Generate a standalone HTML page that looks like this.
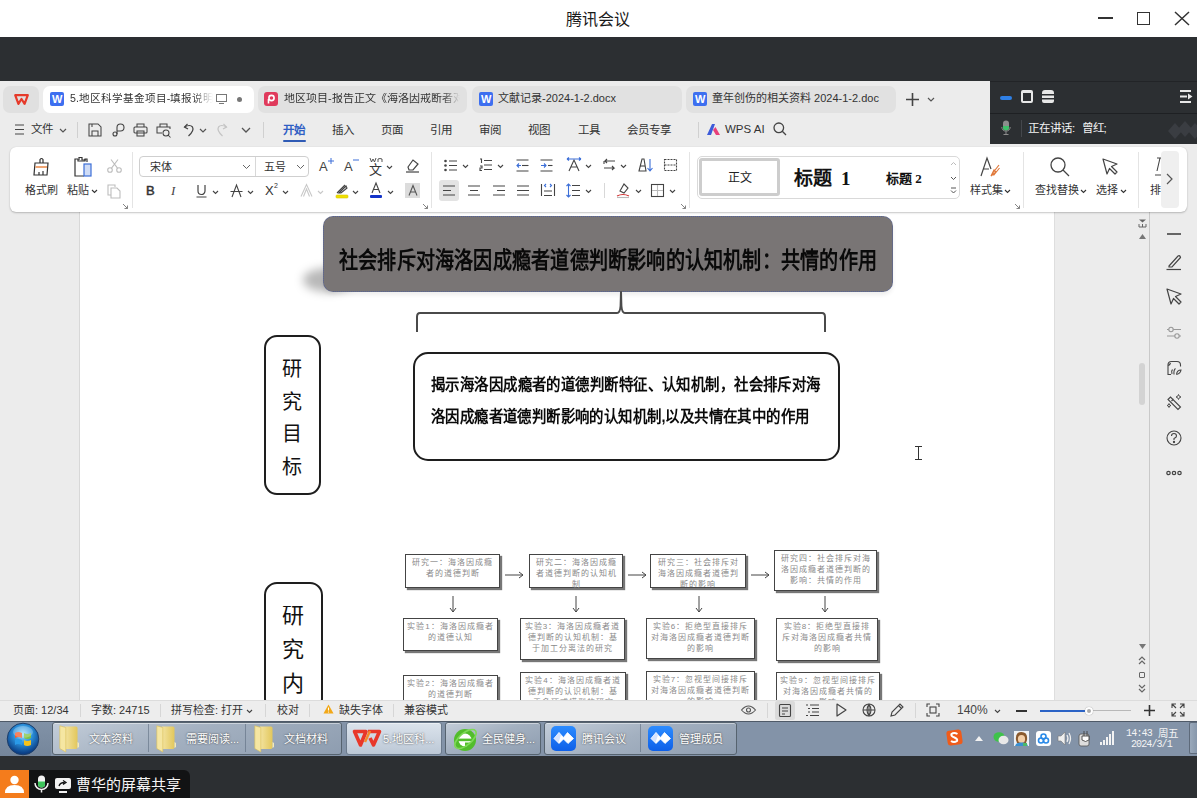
<!DOCTYPE html>
<html lang="zh-CN"><head><meta charset="utf-8">
<style>
*{margin:0;padding:0;box-sizing:border-box}
html,body{width:1197px;height:798px;overflow:hidden;background:#fff;font-family:"Liberation Sans",sans-serif;color:#222}
.a{position:absolute}
.t{position:absolute;white-space:nowrap;line-height:1}
svg{position:absolute;overflow:visible}
.tab{position:absolute;top:86px;height:27px;border-radius:7px;background:#e1e1e1}
.sep{position:absolute;width:1px;background:#d6d6d6}
.serif{font-family:"Liberation Serif",serif}
.fb{position:absolute;background:#fff;border:1px solid #444;box-shadow:2px 2px 1px #777;color:#8a8a8a;font-size:8px;line-height:11px;font-family:"Liberation Sans",sans-serif;text-align:center;padding:2px 3px;letter-spacing:1px}
.tb{position:absolute;top:722px;height:33px;border:1px solid #56636f;border-radius:3px;background:linear-gradient(160deg,#c3cdd9,#a3b0c0 45%,#8e9db0);box-shadow:inset 0 1px 0 rgba(255,255,255,.45)}
.tbt{position:absolute;color:#fff;font-size:11px;white-space:nowrap;text-shadow:0 0 2px #333}
</style></head><body>

<!-- ===== title bar ===== -->
<div class="t" style="left:566px;top:12px;font-size:16px;color:#1a1a1a">腾讯会议</div>
<div class="a" style="left:1098px;top:17px;width:15px;height:2px;background:#333"></div>
<div class="a" style="left:1137px;top:12px;width:13px;height:13px;border:1.6px solid #333"></div>
<svg style="left:1174px;top:11px" width="16" height="15"><path d="M1 1L15 14M15 1L1 14" stroke="#333" stroke-width="1.5"/></svg>

<!-- ===== dark band ===== -->
<div class="a" style="left:0;top:37px;width:1197px;height:44px;background:#2c2f32"></div>

<!-- ===== tab bar + menu ===== -->
<div class="a" style="left:0;top:81px;width:1197px;height:131px;background:#ececec"></div>
<div class="tab" style="left:3px;width:36px;background:#e0e0e0"></div>
<div class="tab" style="left:43px;width:211px;background:#fff"></div>
<div class="tab" style="left:258px;width:209px"></div>
<div class="tab" style="left:472px;width:210px"></div>
<div class="tab" style="left:686px;width:210px"></div>

<!-- tab contents -->
<svg style="left:14px;top:94px" width="15" height="11"><path d="M1.2 1.2H13.8L10.6 9.8L7.5 5L4.4 9.8Z" fill="none" stroke="#e63a2a" stroke-width="2.2" stroke-linejoin="round"/></svg>
<div class="a" style="left:50px;top:92px;width:14px;height:14px;border-radius:2px;background:#3d6ff0"></div>
<div class="t" style="left:52px;top:94px;font-size:11px;font-weight:bold;color:#fff">W</div>
<div class="t" style="left:70px;top:93px;font-size:10.6px;color:#333;width:143px;overflow:hidden;-webkit-mask-image:linear-gradient(90deg,#000 86%,transparent)">5.地区科学基金项目-填报说明书</div>
<svg style="left:216px;top:94px" width="11" height="10"><rect x="0.5" y="0.5" width="10" height="7" fill="none" stroke="#777" stroke-width="1"/><path d="M3 9.5H8" stroke="#777"/></svg>
<div class="a" style="left:237px;top:97px;width:5px;height:5px;border-radius:50%;background:#777"></div>

<div class="a" style="left:264px;top:92px;width:14px;height:14px;border-radius:3px;background:#e03a5c"></div>
<svg style="left:266px;top:94px" width="10" height="10"><circle cx="5.5" cy="4" r="2.6" fill="none" stroke="#fff" stroke-width="1.6"/><path d="M2.5 9.5V5" stroke="#fff" stroke-width="1.6"/></svg>
<div class="t" style="left:284px;top:93px;font-size:11px;color:#333;width:176px;overflow:hidden;-webkit-mask-image:linear-gradient(90deg,#000 90%,transparent)">地区项目-报告正文《海洛因戒断者对社会</div>

<div class="a" style="left:479px;top:92px;width:14px;height:14px;border-radius:2px;background:#3d6ff0"></div>
<div class="t" style="left:481px;top:94px;font-size:11px;font-weight:bold;color:#fff">W</div>
<div class="t" style="left:498px;top:93px;font-size:11px;color:#333">文献记录-2024-1-2.docx</div>

<div class="a" style="left:693px;top:92px;width:14px;height:14px;border-radius:2px;background:#3d6ff0"></div>
<div class="t" style="left:695px;top:94px;font-size:11px;font-weight:bold;color:#fff">W</div>
<div class="t" style="left:712px;top:93px;font-size:11px;color:#333">童年创伤的相关资料 2024-1-2.doc</div>

<svg style="left:905px;top:92px" width="15" height="15"><path d="M7.5 1V14M1 7.5H14" stroke="#444" stroke-width="1.6"/></svg>
<svg style="left:927px;top:97px" width="8" height="5"><path d="M1 1L4 4L7 1" fill="none" stroke="#555" stroke-width="1.2"/></svg>

<!-- menu row -->
<svg style="left:15px;top:124px" width="9" height="11"><path d="M0 1H9M0 5.5H9M0 10H9" stroke="#444" stroke-width="1.2"/></svg>
<div class="t" style="left:31px;top:124px;font-size:11.5px;color:#333">文件</div>
<svg style="left:59px;top:128px" width="8" height="5"><path d="M1 1L4 4L7 1" fill="none" stroke="#555" stroke-width="1.2"/></svg>
<div class="sep" style="left:77px;top:122px;height:16px;background:#d0d0d0"></div>
<svg style="left:88px;top:123px" width="14" height="14" fill="none" stroke="#444" stroke-width="1.05"><path d="M1 1H10L13 4V13H1Z"/><path d="M4 13V8H10V13"/><path d="M4 1V4"/></svg>
<svg style="left:111px;top:123px" width="14" height="14" fill="none" stroke="#444" stroke-width="1.1"><path d="M6 11V4.5A3.5 3.5 0 1 1 9.5 8H6"/><circle cx="4" cy="11" r="2"/></svg>
<svg style="left:133px;top:123px" width="15" height="14" fill="none" stroke="#444" stroke-width="1.05"><path d="M4 4V1H11V4"/><rect x="1" y="4" width="13" height="6" rx="1"/><rect x="4" y="8" width="7" height="5"/></svg>
<svg style="left:156px;top:123px" width="15" height="15" fill="none" stroke="#444" stroke-width="1.05"><path d="M4 4V1H11V4"/><path d="M6 10H1V4H14V6"/><circle cx="10" cy="10" r="3"/><path d="M12 12L14.5 14.5"/></svg>
<svg style="left:183px;top:123px" width="12" height="14" fill="none" stroke="#444" stroke-width="1.2"><path d="M4.5 1L1.5 4L5 6"/><path d="M1.5 4Q7 1 9.5 4Q11.5 7.5 5.5 13"/></svg>
<svg style="left:199px;top:128px" width="8" height="5"><path d="M1 1L4 4L7 1" fill="none" stroke="#555" stroke-width="1.2"/></svg>
<svg style="left:216px;top:123px" width="12" height="14" fill="none" stroke="#c4c4c4" stroke-width="1.2"><path d="M7.5 1L10.5 4L7 6"/><path d="M10.5 4Q5 1 2.5 4Q0.5 7.5 6.5 13"/></svg>
<svg style="left:241px;top:127px" width="10" height="6"><path d="M1 1L5 5L9 1" fill="none" stroke="#555" stroke-width="1.3"/></svg>
<div class="sep" style="left:263px;top:122px;height:16px;background:#d0d0d0"></div>
<div class="t" style="left:283px;top:124.5px;font-size:11.5px;color:#2f5ec4;font-weight:bold">开始</div>
<div class="a" style="left:283px;top:140px;width:23px;height:2px;border-radius:1px;background:#2f5bb5"></div>
<div class="t" style="left:332px;top:124.5px;font-size:11.5px;color:#333">插入</div>
<div class="t" style="left:381px;top:124.5px;font-size:11.5px;color:#333">页面</div>
<div class="t" style="left:430px;top:124.5px;font-size:11.5px;color:#333">引用</div>
<div class="t" style="left:479px;top:124.5px;font-size:11.5px;color:#333">审阅</div>
<div class="t" style="left:528px;top:124.5px;font-size:11.5px;color:#333">视图</div>
<div class="t" style="left:578px;top:124.5px;font-size:11.5px;color:#333">工具</div>
<div class="t" style="left:627px;top:124.5px;font-size:11.5px;color:#333">会员专享</div>
<div class="sep" style="left:698px;top:122px;height:16px;background:#d0d0d0"></div>
<svg style="left:706px;top:123px" width="15" height="13"><path d="M1 12L6 1H9L5 12Z" fill="#3d5bd9"/><path d="M7 7L10 12H14L9.5 4Z" fill="#e8407a"/></svg>
<div class="t" style="left:725px;top:124px;font-size:11.5px;color:#333">WPS AI</div>
<svg style="left:773px;top:122px" width="14" height="14" fill="none" stroke="#444" stroke-width="1.3"><circle cx="5.8" cy="5.8" r="4.8"/><path d="M9.3 9.3L13 13"/></svg>

<!-- dark meeting panel -->
<div class="a" style="left:990px;top:81px;width:207px;height:63px;background:#2c2f32;border-top:1px solid #222427"></div>
<div class="a" style="left:990px;top:113px;width:207px;height:1px;background:#1e2023"></div>
<div class="a" style="left:1000px;top:96px;width:12px;height:4px;border-radius:2px;background:#2f80e6"></div>
<div class="a" style="left:1021px;top:90px;width:12px;height:13px;border:2px solid #e8e8e8;border-top-width:3px;border-radius:2px"></div>
<svg style="left:1042px;top:90px" width="12" height="13"><path d="M0 3Q0 0 3 0H9Q12 0 12 3V4H0Z M0 5.5H12V8H0Z M0 9.5H12V11Q12 13 10 13H2Q0 13 0 11Z" fill="#e8e8e8"/></svg>
<svg style="left:1180px;top:90px" width="13" height="13"><path d="M0 1H11M0 6.5H7M0 12H11" stroke="#e8e8e8" stroke-width="2"/><path d="M8 3.5L12.5 6.5L8 9.5Z" fill="#e8e8e8"/></svg>
<svg style="left:1001px;top:120px" width="10" height="16"><rect x="2" y="0.5" width="6" height="10" rx="3" fill="#8c8c8c"/><path d="M2 6H8V7.5A3 3 0 0 1 2 7.5Z" fill="#3fbf6a"/><path d="M0.8 7A4.2 4.2 0 0 0 9.2 7M5 11.5V14M2.5 14.5H7.5" fill="none" stroke="#8c8c8c" stroke-width="1"/></svg>
<div class="a" style="left:1021px;top:120px;width:1px;height:17px;background:#44474c"></div>
<div class="t" style="left:1028px;top:123px;font-size:11.5px;color:#f2f2f2">正在讲话:&nbsp; 曾红;</div>
<svg style="left:1168px;top:119px" width="30" height="20"><path d="M0 12L7 4L14 12L7 20Z M10 10L17 2L24 10L17 18Z M20 12L27 4L34 12L27 20Z" fill="#3a3d42"/></svg>

<!-- doc bg -->
<div class="a" style="left:0;top:212px;width:1197px;height:488px;background:#ececec"></div>
<div class="a" style="left:79px;top:212px;width:976px;height:488px;background:#fff;border-left:1px solid #d8d8d8;border-right:1px solid #dedede"></div>
<div class="a" style="left:1149px;top:212px;width:1px;height:488px;background:#c9c9c9"></div>
<!-- ribbon panel -->
<div class="a" style="left:10px;top:147px;width:1177px;height:65px;background:#fff;border-radius:6px;box-shadow:0 1px 2px rgba(0,0,0,.22),0 0 1px rgba(0,0,0,.15)"></div>


<!-- ribbon contents -->
<svg style="left:32px;top:157px" width="19" height="20" fill="none" stroke="#333" stroke-width="1.2"><path d="M8 6V2.5Q9.5 0.5 11 2.5V6"/><path d="M3 6H16L15 18H2Z"/><path d="M3.5 10H15" stroke="#e8803a" stroke-width="1.4"/><path d="M11 14V18M7 15V18"/></svg>
<div class="t" style="left:25px;top:185px;font-size:11px;color:#333">格式刷</div>
<svg style="left:72px;top:156px" width="21" height="21" fill="none" stroke="#333" stroke-width="1.2"><path d="M6 3H3V20H12"/><path d="M7 4V1.5H10V4H13V3H15V6"/><path d="M6 3V5H13V3"/><rect x="12" y="8" width="7" height="12" stroke="#3c6fd8" fill="#cfdcf6"/></svg>
<div class="t" style="left:67px;top:185px;font-size:11px;color:#333">粘贴</div>
<svg style="left:91px;top:189px" width="7" height="5"><path d="M1 1L3.5 3.5L6 1" fill="none" stroke="#333" stroke-width="1.1"/></svg>
<svg style="left:107px;top:159px" width="15" height="14" fill="none" stroke="#bdbdbd" stroke-width="1.1"><circle cx="3" cy="11" r="2.3"/><circle cx="12" cy="11" r="2.3"/><path d="M4.5 9.2L11 0.5M10.5 9.2L4 0.5"/></svg>
<svg style="left:107px;top:184px" width="15" height="15" fill="none" stroke="#bdbdbd" stroke-width="1.1"><path d="M4 11H1V1H8V3"/><path d="M4 4H10L13 7V14H4Z"/></svg>
<svg style="left:123px;top:204px" width="5" height="5"><path d="M0 0L4.5 4.5M1.5 4.5H4.5V1.5" fill="none" stroke="#777" stroke-width="0.9"/></svg>
<div class="sep" style="left:132px;top:152px;height:56px;background:#e4e4e4"></div>

<div class="a" style="left:139px;top:156px;width:170px;height:21px;border:1px solid #cfcfcf;border-radius:4px"></div>
<div class="a" style="left:255px;top:157px;width:1px;height:19px;background:#d8d8d8"></div>
<div class="t" style="left:150px;top:162px;font-size:11px;color:#333">宋体</div>
<svg style="left:242px;top:164px" width="9" height="6"><path d="M1 1L4.5 4.5L8 1" fill="none" stroke="#666" stroke-width="1"/></svg>
<div class="t" style="left:264px;top:162px;font-size:11px;color:#333">五号</div>
<svg style="left:296px;top:164px" width="9" height="6"><path d="M1 1L4.5 4.5L8 1" fill="none" stroke="#666" stroke-width="1"/></svg>
<div class="t" style="left:319px;top:160px;font-size:13px;color:#444">A</div>
<svg style="left:328px;top:158px" width="6" height="6"><path d="M3 0V6M0 3H6" stroke="#3c6fd8" stroke-width="1"/></svg>
<div class="t" style="left:344px;top:160px;font-size:13px;color:#444">A</div>
<svg style="left:353px;top:159px" width="6" height="2"><path d="M0 1H6" stroke="#3c6fd8" stroke-width="1"/></svg>
<div class="t" style="left:369px;top:163px;font-size:13px;color:#333">文</div><svg style="left:369px;top:157px" width="15" height="6" fill="none" stroke="#444" stroke-width="0.9"><path d="M1 1L2.5 5L4 2L5.5 5L7 1M9 5V2Q11 1 13 2V5"/></svg>
<svg style="left:386px;top:165px" width="7" height="5"><path d="M1 1L3.5 3.5L6 1" fill="none" stroke="#444" stroke-width="1.1"/></svg>
<svg style="left:405px;top:158px" width="15" height="15" fill="none" stroke="#444" stroke-width="1.2"><path d="M3 9L8 2L13 6L8 12H4Z"/><path d="M1 14H14"/></svg>

<div class="t" style="left:146px;top:184px;font-size:13px;color:#333;-webkit-text-stroke:0.5px #333">B</div>
<div class="t" style="left:171px;top:184px;font-size:13px;color:#444;font-style:italic;font-family:'Liberation Serif',serif">I</div>
<svg style="left:196px;top:184px" width="11" height="14" fill="none" stroke="#444" stroke-width="1.2"><path d="M2 1V7A3.5 3.5 0 0 0 9 7V1M0.5 13H10.5"/></svg>
<svg style="left:212px;top:190px" width="7" height="5"><path d="M1 1L3.5 3.5L6 1" fill="none" stroke="#444" stroke-width="1.1"/></svg>
<svg style="left:230px;top:184px" width="13" height="14" fill="none" stroke="#444" stroke-width="1.1"><path d="M2 13L6.5 1L11 13M0.5 7.5H12.5"/></svg>
<svg style="left:247px;top:190px" width="7" height="5"><path d="M1 1L3.5 3.5L6 1" fill="none" stroke="#444" stroke-width="1.1"/></svg>
<div class="t" style="left:265px;top:184px;font-size:13px;color:#333">X</div>
<div class="t" style="left:274px;top:182px;font-size:7px;color:#333">2</div>
<svg style="left:282px;top:190px" width="7" height="5"><path d="M1 1L3.5 3.5L6 1" fill="none" stroke="#444" stroke-width="1.1"/></svg>
<svg style="left:300px;top:184px" width="13" height="13" fill="none" stroke="#c8c8c8" stroke-width="1.1"><path d="M1 12.5L6.5 0.5L12 12.5M3.5 12.5L6.5 5L9.5 12.5"/></svg>
<svg style="left:317px;top:190px" width="7" height="5"><path d="M1 1L3.5 3.5L6 1" fill="none" stroke="#c8c8c8" stroke-width="1.1"/></svg>
<svg style="left:335px;top:182px" width="14" height="17"><path d="M2 11L10 3M4 11L11 4L12 6L6 11Z" fill="none" stroke="#444" stroke-width="1.1"/><rect x="1" y="13" width="12" height="3" rx="1" fill="#f0e000" stroke="#d9c800" stroke-width="0.6"/></svg>
<svg style="left:352px;top:190px" width="7" height="5"><path d="M1 1L3.5 3.5L6 1" fill="none" stroke="#444" stroke-width="1.1"/></svg>
<svg style="left:369px;top:182px" width="14" height="17"><path d="M3 11L7 1L11 11M4.5 7.5H9.5" fill="none" stroke="#444" stroke-width="1.1"/><rect x="1" y="13" width="12" height="3" rx="1" fill="#1233c8"/></svg>
<svg style="left:387px;top:190px" width="7" height="5"><path d="M1 1L3.5 3.5L6 1" fill="none" stroke="#444" stroke-width="1.1"/></svg>
<div class="a" style="left:405px;top:183px;width:15px;height:15px;background:#dcdcdc"></div>
<svg style="left:408px;top:185px" width="10" height="11"><path d="M1 10.5L5 0.5L9 10.5M2.5 7H7.5" fill="none" stroke="#555" stroke-width="1.1"/></svg>
<svg style="left:423px;top:204px" width="5" height="5"><path d="M0 0L4.5 4.5M1.5 4.5H4.5V1.5" fill="none" stroke="#777" stroke-width="0.9"/></svg>
<div class="sep" style="left:431px;top:152px;height:56px;background:#e4e4e4"></div>

<svg style="left:444px;top:159px" width="14" height="13" fill="#444"><circle cx="1.5" cy="2" r="1.3"/><circle cx="1.5" cy="6.5" r="1.3"/><circle cx="1.5" cy="11" r="1.3"/><path d="M5 2H13M5 6.5H13M5 11H13" stroke="#444" stroke-width="1.1"/></svg>
<svg style="left:462px;top:164px" width="7" height="5"><path d="M1 1L3.5 3.5L6 1" fill="none" stroke="#444" stroke-width="1.1"/></svg>
<svg style="left:479px;top:158px" width="14" height="14" fill="none" stroke="#444" stroke-width="1.1"><path d="M1 1H2.5V5M1 8H3V10H1V12.5H3M5 2.5H13M5 7H13M5 11.5H13"/></svg>
<svg style="left:497px;top:164px" width="7" height="5"><path d="M1 1L3.5 3.5L6 1" fill="none" stroke="#444" stroke-width="1.1"/></svg>
<svg style="left:516px;top:159px" width="13" height="13" fill="none" stroke-width="1.1"><path d="M0.5 1H12.5M0.5 12H12.5" stroke="#444"/><path d="M6 6.5H12.5" stroke="#444"/><path d="M1 6.5H5M3 4.5L1 6.5L3 8.5" stroke="#3c6fd8"/></svg>
<svg style="left:540px;top:159px" width="13" height="13" fill="none" stroke-width="1.1"><path d="M0.5 1H12.5M0.5 12H12.5" stroke="#444"/><path d="M8 6.5H12.5" stroke="#444"/><path d="M1 6.5H6M4 4.5L6 6.5L4 8.5" stroke="#3c6fd8"/></svg>
<svg style="left:566px;top:157px" width="16" height="15" fill="none" stroke-width="1.1"><path d="M3 14L8 3L13 14M5 10H11" stroke="#444"/><path d="M1 2H15M1 2L3 0.5M1 2L3 3.5M15 2L13 0.5M15 2L13 3.5" stroke="#3c6fd8"/></svg>
<svg style="left:585px;top:164px" width="7" height="5"><path d="M1 1L3.5 3.5L6 1" fill="none" stroke="#444" stroke-width="1.1"/></svg>
<svg style="left:603px;top:158px" width="13" height="14" fill="none" stroke="#444" stroke-width="1.1"><path d="M12 3H2L4 1M2 3L4 5M1 10H11L9 8M11 10L9 12M1 3V6"/></svg>
<svg style="left:620px;top:164px" width="7" height="5"><path d="M1 1L3.5 3.5L6 1" fill="none" stroke="#444" stroke-width="1.1"/></svg>
<svg style="left:638px;top:158px" width="15" height="14" fill="none" stroke-width="1.1"><path d="M1 13L4 1H6L8 13Z" stroke="#444"/><path d="M2 8H7" stroke="#444"/><path d="M12 1V12.5M9.5 10L12 12.8L14.5 10" stroke="#3c6fd8"/></svg>
<svg style="left:664px;top:159px" width="13" height="12" fill="none" stroke="#444" stroke-width="1.1" stroke-dasharray="2 1"><rect x="0.5" y="0.5" width="12" height="11"/><path d="M0.5 6H12.5"/></svg>

<div class="a" style="left:439px;top:180px;width:20px;height:21px;border-radius:3px;background:#e3e3e3"></div>
<svg style="left:443px;top:185px" width="12" height="11" fill="none" stroke="#444" stroke-width="1.1"><path d="M0 1H12M0 5.5H8M0 10H12"/></svg>
<svg style="left:468px;top:185px" width="12" height="11" fill="none" stroke="#444" stroke-width="1.1"><path d="M0 1H12M2 5.5H10M0 10H12"/></svg>
<svg style="left:493px;top:185px" width="12" height="11" fill="none" stroke="#444" stroke-width="1.1"><path d="M0 1H12M4 5.5H12M0 10H12"/></svg>
<svg style="left:517px;top:185px" width="12" height="11" fill="none" stroke="#444" stroke-width="1.1"><path d="M0 1H12M0 5.5H12M0 10H12"/></svg>
<svg style="left:541px;top:183px" width="14" height="14" fill="none" stroke-width="1.1"><path d="M0.5 1V13M13.5 1V13M3 8H11M3 12.5H11" stroke="#444"/><path d="M5 1L3.5 2.5L5 4M9 1L10.5 2.5L9 4" stroke="#3c6fd8"/></svg>
<svg style="left:566px;top:183px" width="14" height="15" fill="none" stroke-width="1.1"><path d="M6 2.5H14M6 7.5H14M6 12.5H14" stroke="#444"/><path d="M2.5 1V14M0.5 3L2.5 1L4.5 3M0.5 12L2.5 14L4.5 12" stroke="#3c6fd8"/></svg>
<svg style="left:585px;top:189px" width="7" height="5"><path d="M1 1L3.5 3.5L6 1" fill="none" stroke="#444" stroke-width="1.1"/></svg>
<div class="sep" style="left:604px;top:183px;height:15px;background:#d8d8d8"></div>
<svg style="left:616px;top:182px" width="15" height="17" fill="none" stroke-width="1.1"><path d="M4 9L8 2L12 6L8 11Z" stroke="#444"/><path d="M1 14Q7 11 13 14" stroke="#d03030"/><path d="M1 15.5H13" stroke="#bbb"/></svg>
<svg style="left:635px;top:189px" width="7" height="5"><path d="M1 1L3.5 3.5L6 1" fill="none" stroke="#444" stroke-width="1.1"/></svg>
<svg style="left:651px;top:184px" width="13" height="13" fill="none" stroke-width="1.1"><rect x="0.5" y="0.5" width="12" height="12" stroke="#444"/><path d="M6.5 1V12M1 6.5H12" stroke="#bbb"/></svg>
<svg style="left:669px;top:189px" width="7" height="5"><path d="M1 1L3.5 3.5L6 1" fill="none" stroke="#444" stroke-width="1.1"/></svg>
<svg style="left:681px;top:204px" width="5" height="5"><path d="M0 0L4.5 4.5M1.5 4.5H4.5V1.5" fill="none" stroke="#777" stroke-width="0.9"/></svg>
<div class="sep" style="left:689px;top:152px;height:56px;background:#e4e4e4"></div>

<div class="a" style="left:697px;top:156px;width:263px;height:43px;border:1px solid #d9d9d9;border-radius:5px"></div>
<div class="a" style="left:699px;top:158px;width:81px;height:38px;border:3px solid #cdcdcd;border-radius:3px"></div>
<div class="t" style="left:728px;top:172px;font-size:12px;color:#222">正文</div>
<div class="t" style="left:794px;top:169px;font-size:19px;color:#111;font-weight:bold">标题<span class="serif" style="margin-left:9px">1</span></div>
<div class="t" style="left:886px;top:172px;font-size:13px;color:#111;font-weight:bold">标题<span class="serif"> 2</span></div>
<svg style="left:950px;top:160px" width="7" height="36" fill="none" stroke-width="1"><path d="M1 5L3.5 2.5L6 5" stroke="#bbb"/><path d="M1 17L3.5 19.5L6 17" stroke="#555"/><path d="M1 28H6M1 30.5L3.5 33L6 30.5" stroke="#555"/></svg>

<svg style="left:980px;top:157px" width="22" height="20" fill="none" stroke-width="1.2"><path d="M1 19L7 1L11 12M3.5 12H9" stroke="#444"/><path d="M12 17L19 8M13.5 18.5L19.5 11M11 19L14 13L16 15Z" stroke="#e0783a"/></svg>
<div class="t" style="left:970px;top:185px;font-size:11px;color:#333">样式集</div>
<svg style="left:1004px;top:189px" width="7" height="5"><path d="M1 1L3.5 3.5L6 1" fill="none" stroke="#333" stroke-width="1.1"/></svg>
<svg style="left:1015px;top:204px" width="5" height="5"><path d="M0 0L4.5 4.5M1.5 4.5H4.5V1.5" fill="none" stroke="#777" stroke-width="0.9"/></svg>
<div class="sep" style="left:1023px;top:152px;height:56px;background:#e4e4e4"></div>
<svg style="left:1050px;top:157px" width="20" height="20" fill="none" stroke="#444" stroke-width="1.3"><circle cx="8" cy="8" r="7"/><path d="M13 13L19 19"/></svg>
<div class="t" style="left:1035px;top:185px;font-size:11px;color:#333">查找替换</div>
<svg style="left:1080px;top:189px" width="7" height="5"><path d="M1 1L3.5 3.5L6 1" fill="none" stroke="#333" stroke-width="1.1"/></svg>
<svg style="left:1102px;top:158px" width="17" height="17" fill="none" stroke="#444" stroke-width="1.2" stroke-linejoin="round"><path d="M1 1L15 6L9.5 8.5L15 14L13 16L7.5 10.5L5 16Z"/></svg>
<div class="t" style="left:1096px;top:185px;font-size:11px;color:#333">选择</div>
<svg style="left:1120px;top:189px" width="7" height="5"><path d="M1 1L3.5 3.5L6 1" fill="none" stroke="#333" stroke-width="1.1"/></svg>
<div class="sep" style="left:1138px;top:152px;height:56px;background:#e4e4e4"></div>
<svg style="left:1155px;top:157px" width="8" height="20" fill="none" stroke="#444" stroke-width="1.1"><path d="M2 1H8M5 1L2 14M0 18H8"/></svg>
<div class="t" style="left:1150px;top:185px;font-size:11px;color:#333">排</div>
<div class="a" style="left:1161px;top:151px;width:18px;height:57px;border-radius:4px;background:#efefef"></div>
<svg style="left:1166px;top:173px" width="7" height="12"><path d="M1 1L6 6L1 11" fill="none" stroke="#555" stroke-width="1.2"/></svg>

<!-- ===== document area ===== -->


<!-- doc content -->
<div class="a" style="left:303px;top:268px;width:50px;height:24px;border-radius:50%;background:rgba(0,0,0,.28);filter:blur(5px)"></div>
<div class="a" style="left:323px;top:216px;width:570px;height:76px;border-radius:10px;background:#797575;border:1.5px dotted #52619a;box-shadow:0 3px 4px rgba(0,0,0,.07)"></div>
<div class="t" style="left:339px;top:249px;width:648px;font-size:23px;color:#0a0a0a;font-weight:bold;font-family:'Liberation Sans',sans-serif;transform:scaleX(0.83);transform-origin:0 0;text-align:justify;text-align-last:justify">社会排斥对海洛因成瘾者道德判断影响的认知机制：共情的作用</div>
<svg style="left:0;top:0" width="1197" height="798"><path d="M417 332V317Q417 313 420 313H617Q620 313 620.6 306L621 292L621.4 306Q622 313 625 313H822Q825 313 825 317V332" fill="none" stroke="#4a4a4a" stroke-width="2" stroke-linejoin="round"/></svg>
<div class="a" style="left:264px;top:335px;width:57px;height:160px;border:2px solid #1e1e1e;border-radius:13px"></div>
<div class="t" style="left:276px;top:353px;font-size:20px;line-height:32.5px;color:#111;width:32px;white-space:normal;text-align:center;word-break:break-all">研<br>究<br>目<br>标</div>
<div class="a" style="left:413px;top:352px;width:427px;height:109px;border:2px solid #1e1e1e;border-radius:15px"></div>
<div class="t" style="left:431px;top:369px;width:433px;font-size:16px;line-height:32px;color:#0a0a0a;font-weight:bold;font-family:'Liberation Sans',sans-serif;transform:scaleX(0.9);transform-origin:0 0;text-align:justify;text-align-last:justify">揭示海洛因成瘾者的道德判断特征、认知机制，社会排斥对海</div>
<div class="t" style="left:431px;top:401px;width:420px;font-size:16px;line-height:32px;color:#0a0a0a;font-weight:bold;font-family:'Liberation Sans',sans-serif;transform:scaleX(0.9);transform-origin:0 0;text-align:justify;text-align-last:justify">洛因成瘾者道德判断影响的认知机制,以及共情在其中的作用</div>
<div class="a" style="left:264px;top:582px;width:59px;height:130px;border:2px solid #1e1e1e;border-radius:13px"></div>
<div class="t" style="left:276px;top:599px;font-size:22px;line-height:34px;color:#111;width:34px;white-space:normal;text-align:center">研<br>究<br>内<br>容</div>
<div class="a" style="left:918px;top:446px;width:1px;height:14px;background:#333"></div>
<div class="a" style="left:915px;top:446px;width:7px;height:1px;background:#333"></div>
<div class="a" style="left:915px;top:459px;width:7px;height:1px;background:#333"></div>

<div class="fb" style="left:405px;top:554px;width:95px;height:34px">研究一：海洛因成瘾者的道德判断</div>
<div class="fb" style="left:529px;top:554px;width:94px;height:34px">研究二：海洛因成瘾者道德判断的认知机制</div>
<div class="fb" style="left:650px;top:554px;width:96px;height:34px;overflow:hidden">研究三：社会排斥对海洛因成瘾者道德判断的影响</div>
<div class="fb" style="left:774px;top:550px;width:103px;height:41px">研究四：社会排斥对海洛因成瘾者道德判断的影响：共情的作用</div>
<div class="fb" style="left:403px;top:618px;width:95px;height:33px">实验1：海洛因成瘾者的道德认知</div>
<div class="fb" style="left:520px;top:618px;width:105px;height:42px">实验3：海洛因成瘾者道德判断的认知机制：基于加工分离法的研究</div>
<div class="fb" style="left:646px;top:618px;width:109px;height:41px">实验6：拒绝型直接排斥对海洛因成瘾者道德判断的影响</div>
<div class="fb" style="left:776px;top:618px;width:102px;height:43px">实验8：拒绝型直接排斥对海洛因成瘾者共情的影响</div>
<div class="fb" style="left:403px;top:675px;width:95px;height:40px">实验2：海洛因成瘾者的道德判断</div>
<div class="fb" style="left:520px;top:672px;width:106px;height:42px">实验4：海洛因成瘾者道德判断的认识机制：基于多项式模型的研究</div>
<div class="fb" style="left:646px;top:671px;width:109px;height:42px">实验7：忽视型间接排斥对海洛因成瘾者道德判断的影响</div>
<div class="fb" style="left:776px;top:672px;width:104px;height:42px">实验9：忽视型间接排斥对海洛因成瘾者共情的影响</div>
<svg style="left:0;top:0" width="1197" height="798" fill="none" stroke="#444" stroke-width="1"><path d="M505 575H523M519 572L523 575L519 578"/><path d="M628 575H646M642 572L646 575L642 578"/><path d="M751 575H769M765 572L769 575L765 578"/><path d="M453 596V612M450 608L453 612L456 608"/><path d="M576 596V612M573 608L576 612L579 608"/><path d="M699 596V612M696 608L699 612L702 608"/><path d="M825 596V612M822 608L825 612L828 608"/></svg>


<!-- right sidebar + scrollbar -->
<svg style="left:1138px;top:219px" width="9" height="9"><path d="M1 0.5H8L4.5 3.5Z" fill="#666"/><path d="M1 5V8H8V5M4.5 5V8" fill="none" stroke="#666" stroke-width="1"/></svg>
<svg style="left:1139px;top:234px" width="7" height="5"><path d="M0 5L3.5 0L7 5Z" fill="#777"/></svg>
<div class="a" style="left:1139px;top:363px;width:6px;height:42px;border-radius:3px;background:#d3d3d3"></div>
<svg style="left:1139px;top:644px" width="7" height="5"><path d="M0 0L3.5 5L7 0Z" fill="#777"/></svg>
<svg style="left:1138px;top:656px" width="8" height="9" fill="none" stroke="#666" stroke-width="1.2"><path d="M1 4L4 1L7 4M1 8L4 5L7 8"/></svg>
<div class="a" style="left:1139px;top:672px;width:6px;height:6px;border:1.3px solid #666;border-radius:1px"></div>
<svg style="left:1138px;top:684px" width="8" height="9" fill="none" stroke="#666" stroke-width="1.2"><path d="M1 1L4 4L7 1M1 5L4 8L7 5"/></svg>
<div class="a" style="left:1167px;top:233px;width:14px;height:2px;background:#666"></div>
<svg style="left:1166px;top:254px" width="16" height="17" fill="none" stroke="#444" stroke-width="1.2"><path d="M3 12L12 2Q14 1 14.5 3.5L6 13H3Z"/><path d="M0.5 15.5H15"/></svg>
<svg style="left:1166px;top:288px" width="16" height="17" fill="none" stroke="#444" stroke-width="1.2" stroke-linejoin="round"><path d="M1 1L15 6L9.5 8.5L15 14L13 16L7.5 10.5L5 16Z"/></svg>
<svg style="left:1166px;top:326px" width="16" height="14" fill="none" stroke="#999" stroke-width="1.1"><path d="M1 3.5H15M1 10H15"/><circle cx="5" cy="3.5" r="2.2" fill="#ececec"/><circle cx="11" cy="10" r="2.2" fill="#ececec"/></svg>
<svg style="left:1166px;top:360px" width="16" height="16" fill="none" stroke="#444" stroke-width="1.1"><path d="M5 14.5H2V5Q2 1.5 5.5 1.5H11Q14.5 1.5 14.5 5V6.5"/><path d="M2 5.5Q4 5 4.5 3"/><path d="M8 14.5Q7.5 10 9.5 8.5M10.5 14.5Q11 10 15 10Q14.5 13.5 10.5 14.5M6 14Q5 11 6.5 9.5"/></svg>
<svg style="left:1166px;top:394px" width="16" height="16" fill="none" stroke="#444" stroke-width="1.1"><path d="M2 5.5L4.5 3L14.5 13L12 15.5Z M5.5 7L7.5 5"/><path d="M12.5 0.5L13.3 2.2L15 3L13.3 3.8L12.5 5.5L11.7 3.8L10 3L11.7 2.2Z M3 9.5L3.7 11L5 11.5L3.7 12L3 13.5L2.3 12L1 11.5L2.3 11Z" stroke-width="0.9"/></svg>
<svg style="left:1166px;top:430px" width="16" height="16" fill="none" stroke="#444" stroke-width="1.1"><circle cx="8" cy="8" r="7"/><path d="M5.5 6Q5.5 3.5 8 3.5Q10.5 3.5 10.5 6Q10.5 7.5 8 8.5V10"/><circle cx="8" cy="12" r="0.6" fill="#444"/></svg>
<svg style="left:1166px;top:470px" width="16" height="6" fill="none" stroke="#444" stroke-width="1.2"><circle cx="2.5" cy="3" r="1.7"/><circle cx="8" cy="3" r="1.7"/><circle cx="13.5" cy="3" r="1.7"/></svg>

<!-- ===== status bar ===== -->
<div class="a" style="left:0;top:700px;width:1197px;height:21px;background:#ededed;border-top:1px solid #dcdcdc"></div>


<div class="t" style="left:13px;top:705px;font-size:11px;color:#333">页面: 12/34</div>
<div class="sep" style="left:80px;top:704px;height:13px"></div>
<div class="t" style="left:91px;top:705px;font-size:11px;color:#333">字数: 24715</div>
<div class="sep" style="left:160px;top:704px;height:13px"></div>
<div class="t" style="left:171px;top:705px;font-size:11px;color:#333">拼写检查: 打开</div>
<svg style="left:246px;top:709px" width="7" height="5"><path d="M1 1L3.5 3.5L6 1" fill="none" stroke="#444" stroke-width="1.1"/></svg>
<div class="sep" style="left:265px;top:704px;height:13px"></div>
<div class="t" style="left:277px;top:705px;font-size:11px;color:#333">校对</div>
<div class="sep" style="left:309px;top:704px;height:13px"></div>
<svg style="left:323px;top:704px" width="11" height="10"><path d="M5.5 0.5L10.5 9.5H0.5Z" fill="#f2a818"/><path d="M5.5 3.5V6.5" stroke="#fff" stroke-width="1.1"/><circle cx="5.5" cy="8" r="0.6" fill="#fff"/></svg>
<div class="t" style="left:339px;top:705px;font-size:11px;color:#333">缺失字体</div>
<div class="sep" style="left:393px;top:704px;height:13px"></div>
<div class="t" style="left:404px;top:705px;font-size:11px;color:#333">兼容模式</div>
<svg style="left:741px;top:705px" width="15" height="10" fill="none" stroke="#555" stroke-width="1.1"><path d="M0.5 5Q7.5 -3 14.5 5Q7.5 13 0.5 5Z"/><circle cx="7.5" cy="5" r="2"/></svg>
<div class="sep" style="left:767px;top:703px;height:15px"></div>
<div class="a" style="left:775px;top:701px;width:20px;height:19px;border-radius:2px;background:#dadada"></div>
<svg style="left:779px;top:704px" width="12" height="13" fill="none" stroke="#444" stroke-width="1.1"><rect x="0.5" y="0.5" width="11" height="12" rx="1"/><path d="M3 4H9M3 7H9M3 10H6"/></svg>
<svg style="left:806px;top:704px" width="13" height="12" fill="none" stroke="#444" stroke-width="1.1"><path d="M0 1H2M4 1H13M2 4.5H4M6 4.5H13M2 8H4M6 8H13M0 11.5H2M4 11.5H13"/></svg>
<svg style="left:836px;top:703px" width="11" height="14" fill="none" stroke="#444" stroke-width="1.2" stroke-linejoin="round"><path d="M1 1L10 7L1 13Z"/></svg>
<svg style="left:862px;top:703px" width="14" height="14" fill="none" stroke="#444" stroke-width="1.1"><circle cx="7" cy="7" r="6"/><path d="M1 7H13M7 1V13M7 1Q3 7 7 13M7 1Q11 7 7 13"/></svg>
<svg style="left:890px;top:703px" width="14" height="14" fill="none" stroke="#444" stroke-width="1.1"><path d="M1 13L2 9L10 1L13 4L5 12Z M8.5 2.5L11.5 5.5"/></svg>
<div class="sep" style="left:915px;top:703px;height:15px"></div>
<svg style="left:926px;top:703px" width="14" height="14" fill="none" stroke="#444" stroke-width="1.1"><path d="M1 4V1H4M10 1H13V4M13 10V13H10M4 13H1V10"/><rect x="4" y="4" width="6" height="6"/></svg>
<div class="t" style="left:957px;top:704px;font-size:12px;color:#444">140%</div>
<svg style="left:994px;top:709px" width="7" height="5"><path d="M1 1L3.5 3.5L6 1" fill="none" stroke="#444" stroke-width="1.1"/></svg>
<div class="a" style="left:1016px;top:710px;width:11px;height:2px;background:#333"></div>
<div class="a" style="left:1040px;top:710px;width:49px;height:2px;background:#2b63c6"></div>
<div class="a" style="left:1089px;top:710px;width:42px;height:1px;background:#b8b8b8"></div>
<div class="a" style="left:1085px;top:707px;width:8px;height:8px;border-radius:50%;background:#aaa;border:2px solid #fff;box-shadow:0 0 1px #888"></div>
<svg style="left:1144px;top:705px" width="11" height="11"><path d="M5.5 0V11M0 5.5H11" stroke="#333" stroke-width="1.6"/></svg>
<svg style="left:1171px;top:703px" width="14" height="14" fill="none" stroke="#444" stroke-width="1.1"><path d="M1 5V1H5M1 1L5 5M9 1H13V5M13 1L9 5M13 9V13H9M13 13L9 9M5 13H1V9M1 13L5 9"/></svg>

<!-- ===== taskbar ===== -->
<div class="a" style="left:0;top:721px;width:1197px;height:35px;background:#8393a8;border-top:1px solid #4f5a68"></div>


<div class="a" style="left:0;top:722px;width:51px;height:34px;background:linear-gradient(#8192a7,#75869b)"></div>
<svg style="left:6.5px;top:722.5px" width="32" height="32" viewBox="0 0 32 32" overflow="visible"><defs><radialGradient id="orb" cx="50%" cy="35%" r="60%"><stop offset="0" stop-color="#9fe0ff"/><stop offset=".5" stop-color="#2a8ed8"/><stop offset="1" stop-color="#0b3f86"/></radialGradient></defs><circle cx="16" cy="16" r="15.8" fill="url(#orb)" stroke="#1e3e6a" stroke-width="1"/><path d="M8 10Q11 8 15 10V15Q11 13 8 15Z" fill="#f25a2a"/><path d="M17 10Q20 12 24 10V15Q20 17 17 15Z" fill="#7fc242"/><path d="M8 17Q11 15 15 17V22Q11 20 8 22Z" fill="#2a9ae8"/><path d="M17 17Q20 19 24 17V22Q20 24 17 22Z" fill="#f7c21a"/><ellipse cx="16" cy="9" rx="10" ry="6" fill="rgba(255,255,255,.25)"/></svg>
<div class="tb" style="left:52px;width:290px"></div>
<div class="a" style="left:148px;top:724px;width:1px;height:28px;background:rgba(80,95,115,.5)"></div>
<div class="a" style="left:245px;top:724px;width:1px;height:28px;background:rgba(80,95,115,.5)"></div>
<div class="tb" style="left:346px;width:96px;background:linear-gradient(#dbe3ec,#bcc8d6);border-color:#6b7a8c"></div>
<div class="tb" style="left:445px;width:96px"></div>
<div class="tb" style="left:544px;width:193px"></div>
<div class="a" style="left:640px;top:724px;width:1px;height:28px;background:rgba(80,95,115,.5)"></div>
<svg style="left:59px;top:725px" width="22" height="28"><defs><linearGradient id="fg" x1="0" x2="1"><stop offset="0" stop-color="#f3e3a0"/><stop offset="1" stop-color="#e2c75c"/></linearGradient></defs><path d="M6 1.5H17Q18.5 1.5 18.5 3V22Q18.5 24 17 24H6Z" fill="url(#fg)"/><path d="M18.5 17L20 18V22L18.5 23Z" fill="#f4eab8"/><path d="M0.8 0.8L6.8 2.5V27L0.8 23.5Z" fill="#f5e6a2" stroke="#d8bd58" stroke-width="0.6"/></svg>
<div class="tbt" style="left:89px;top:730px">文本资料</div>
<svg style="left:156px;top:725px" width="22" height="28"><defs><linearGradient id="fg" x1="0" x2="1"><stop offset="0" stop-color="#f3e3a0"/><stop offset="1" stop-color="#e2c75c"/></linearGradient></defs><path d="M6 1.5H17Q18.5 1.5 18.5 3V22Q18.5 24 17 24H6Z" fill="url(#fg)"/><path d="M18.5 17L20 18V22L18.5 23Z" fill="#f4eab8"/><path d="M0.8 0.8L6.8 2.5V27L0.8 23.5Z" fill="#f5e6a2" stroke="#d8bd58" stroke-width="0.6"/></svg>
<div class="tbt" style="left:186px;top:730px">需要阅读...</div>
<svg style="left:254px;top:725px" width="22" height="28"><defs><linearGradient id="fg" x1="0" x2="1"><stop offset="0" stop-color="#f3e3a0"/><stop offset="1" stop-color="#e2c75c"/></linearGradient></defs><path d="M6 1.5H17Q18.5 1.5 18.5 3V22Q18.5 24 17 24H6Z" fill="url(#fg)"/><path d="M18.5 17L20 18V22L18.5 23Z" fill="#f4eab8"/><path d="M0.8 0.8L6.8 2.5V27L0.8 23.5Z" fill="#f5e6a2" stroke="#d8bd58" stroke-width="0.6"/></svg>
<div class="tbt" style="left:284px;top:730px">文档材料</div>
<svg style="left:352px;top:729px" width="30" height="19"><path d="M2.5 2.5H14L8.5 16Z" fill="none" stroke="#e8382a" stroke-width="3.6" stroke-linejoin="round"/><path d="M16 2.5H27.5L21.5 16L18 9" fill="none" stroke="#e8382a" stroke-width="3.6" stroke-linejoin="round"/><path d="M18 2L13 13" stroke="#f58a2a" stroke-width="2.5"/></svg>
<div class="tbt" style="left:383px;top:730px">5.地区科...</div>
<svg style="left:452px;top:725px" width="27" height="28"><circle cx="13" cy="15" r="11" fill="#52bd2c"/><circle cx="13" cy="15" r="6.5" fill="#fff"/><rect x="6" y="13.6" width="14" height="2.6" fill="#52bd2c"/><path d="M13 17.5H20V21H13Z" fill="#52bd2c"/><ellipse cx="13.5" cy="14" rx="13" ry="6" fill="none" stroke="#7ed957" stroke-width="1.6" transform="rotate(-40 13.5 14)"/></svg>
<div class="tbt" style="left:482px;top:730px">全民健身...</div>
<div class="a" style="left:551px;top:726px;width:25px;height:25px;border-radius:5px;background:linear-gradient(#2c8cff,#0d5fe8)"></div>
<svg style="left:553px;top:730px" width="22" height="15"><path d="M1 8.5L6 2.5L10.5 7.5L14.5 2.5L20.5 8.5L15 13.5L10.5 9L6 13.5Z" fill="#fff" stroke="#fff" stroke-width="0.8" stroke-linejoin="round"/><path d="M1 8.5L6 2.5L8 5L5.5 12.5Z" fill="#d6e4ff"/></svg>
<div class="tbt" style="left:582px;top:730px">腾讯会议</div>
<div class="a" style="left:648px;top:726px;width:25px;height:25px;border-radius:5px;background:linear-gradient(#2c8cff,#0d5fe8)"></div>
<svg style="left:650px;top:730px" width="22" height="15"><path d="M1 8.5L6 2.5L10.5 7.5L14.5 2.5L20.5 8.5L15 13.5L10.5 9L6 13.5Z" fill="#fff" stroke="#fff" stroke-width="0.8" stroke-linejoin="round"/><path d="M1 8.5L6 2.5L8 5L5.5 12.5Z" fill="#d6e4ff"/></svg>
<div class="tbt" style="left:679px;top:730px">管理成员</div>

<svg style="left:946px;top:729px" width="17" height="17"><rect x="1" y="1" width="15" height="15" rx="3" fill="#ef5b1a" transform="rotate(-8 8.5 8.5)"/><path d="M11.5 5Q8 3 5.5 5Q4.5 7 8.5 8.5Q12 10 11 12Q8 14 5 12" fill="none" stroke="#fff" stroke-width="2"/></svg>
<svg style="left:975px;top:736px" width="8" height="5"><path d="M0 5L4 0L8 5Z" fill="#f2f2f2"/></svg>
<svg style="left:993px;top:731px" width="16" height="14"><ellipse cx="6" cy="6" rx="5.5" ry="4.8" fill="#3ec24a"/><ellipse cx="10.5" cy="9" rx="5" ry="4.3" fill="#e8e8e8"/></svg>
<svg style="left:1014px;top:731px" width="15" height="15"><rect width="15" height="15" fill="#eef2f6"/><path d="M2 9Q1 1 7.5 1Q14 1 13 9L12 12H3Z" fill="#8a5a2e"/><ellipse cx="7.5" cy="8" rx="3.6" ry="4" fill="#f3cfa8"/><path d="M1 15Q2 11 7.5 11.5Q13 11 14 15Z" fill="#3a8fd0"/><rect x="9" y="12" width="4" height="3" fill="#4cb86a"/></svg>
<div class="a" style="left:1036px;top:731px;width:15px;height:15px;border-radius:3px;background:#fff"></div>
<svg style="left:1038px;top:733px" width="11" height="11" fill="none" stroke="#2a8ae8" stroke-width="1.6"><circle cx="5.5" cy="3.5" r="2.5"/><circle cx="3" cy="7.5" r="2.5"/><circle cx="8" cy="7.5" r="2.5"/></svg>
<svg style="left:1057px;top:731px" width="14" height="15"><path d="M1 5H4L8 1V14L4 10H1Z" fill="#eee" stroke="#777" stroke-width="0.6"/><path d="M10 4Q12 7.5 10 11M12 2Q15 7.5 12 13" fill="none" stroke="#eee" stroke-width="1.2"/></svg>
<svg style="left:1078px;top:730px" width="15" height="17"><rect x="1" y="4" width="10" height="12" rx="2" fill="#ddd" stroke="#555" stroke-width="0.8"/><path d="M6 1V6M9 1V6M4 6H11V10Q7.5 13 4 10Z" fill="#fff" stroke="#444" stroke-width="0.9"/></svg>
<svg style="left:1100px;top:731px" width="15" height="14" fill="#f2f2f2"><rect x="0" y="11" width="2" height="3"/><rect x="3" y="9" width="2" height="5"/><rect x="6" y="6" width="2" height="8"/><rect x="9" y="3" width="2" height="11"/><rect x="12" y="0" width="2" height="14"/></svg>
<div class="t" style="left:1126px;top:729px;font-size:10px;color:#f4f4f4;font-family:'Liberation Mono',monospace;letter-spacing:-0.8px">14:43</div>
<div class="t" style="left:1158px;top:728px;font-size:10.5px;color:#f4f4f4">周五</div>
<div class="t" style="left:1131px;top:740px;font-size:10px;color:#f4f4f4;font-family:'Liberation Mono',monospace;letter-spacing:-0.9px">2024/3/1</div>
<div class="a" style="left:1189px;top:722px;width:8px;height:32px;border:1px solid #5d6a7a;border-right:none;border-radius:2px 0 0 2px;background:linear-gradient(90deg,#9aa9bb,#8797ab)"></div>

<!-- ===== bottom band ===== -->
<div class="a" style="left:0;top:756px;width:1197px;height:42px;background:#2c2f32"></div>


<div class="a" style="left:0;top:770px;width:190px;height:28px;background:#121314;border-radius:0 6px 0 0"></div>
<div class="a" style="left:0;top:770px;width:29px;height:28px;background:#f47c1c"></div>
<svg style="left:4px;top:775px" width="21" height="18" fill="#fff"><circle cx="10.5" cy="5" r="4.2"/><path d="M1 18Q1 10 10.5 10Q20 10 20 18Z"/></svg>
<svg style="left:34px;top:775px" width="15" height="18"><rect x="4" y="0.5" width="7" height="12" rx="3.5" fill="#f2f2f2"/><path d="M4 6.5H11V9A3.5 3.5 0 0 1 4 9Z" fill="#3cc45a"/><path d="M1 8A6.5 6.5 0 0 0 14 8M7.5 14.5V17.5" fill="none" stroke="#f2f2f2" stroke-width="1.5"/></svg>
<div class="a" style="left:55px;top:778px;width:16px;height:11px;border-radius:2px;background:#f2f2f2"></div>
<div class="a" style="left:59px;top:791px;width:8px;height:1.5px;background:#f2f2f2"></div>
<svg style="left:58px;top:780px" width="10" height="7"><path d="M1 6Q2 2.5 6.5 2.5M5 0.5L8 2.5L5 4.5" fill="none" stroke="#121314" stroke-width="1.3"/></svg>
<div class="t" style="left:76px;top:777px;font-size:15px;color:#f5f5f5">曹华的屏幕共享</div>

</body></html>
